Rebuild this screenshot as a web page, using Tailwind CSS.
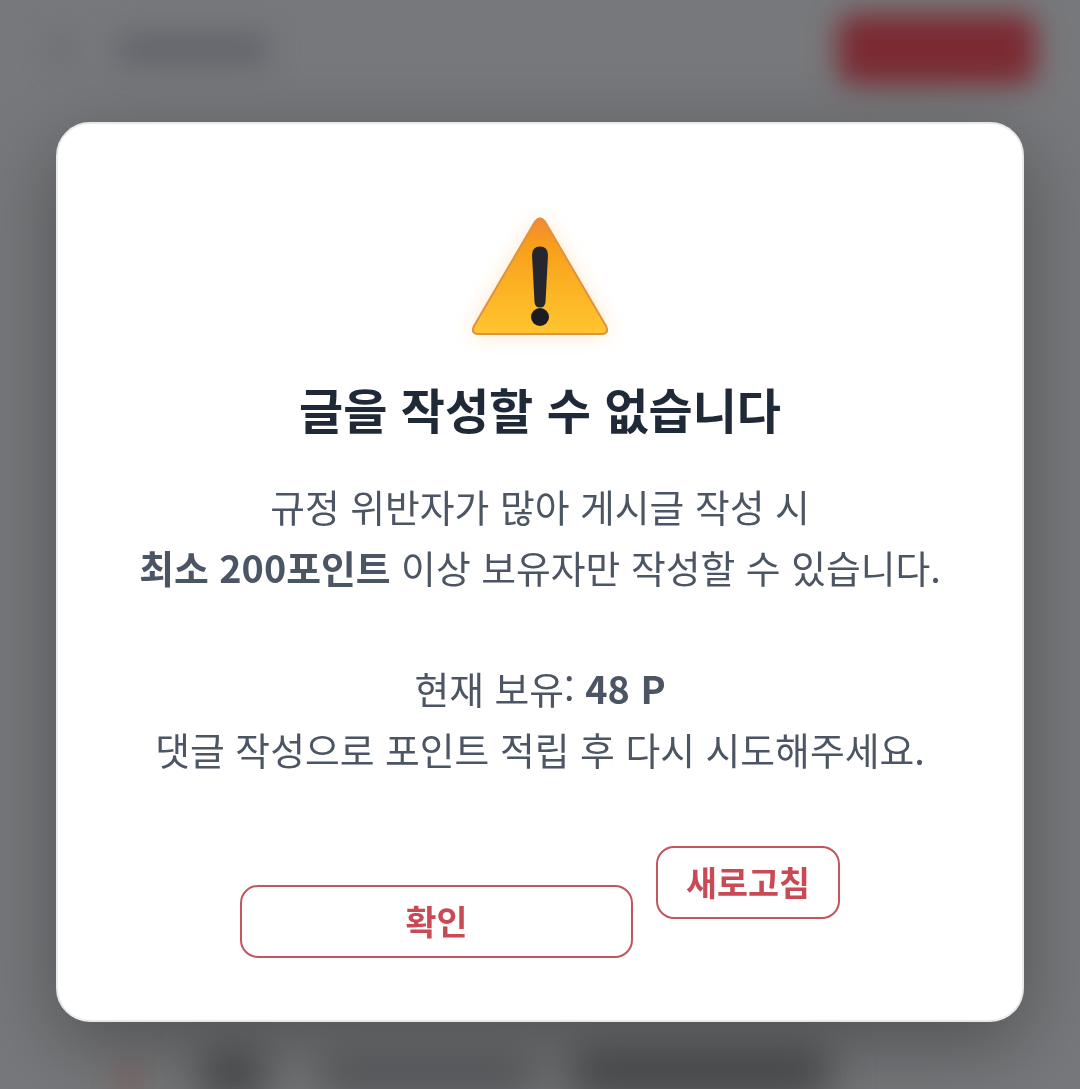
<!DOCTYPE html>
<html lang="ko">
<head>
    <meta charset="UTF-8">
    <meta name="viewport" content="width=device-width, initial-scale=1.0">
    <title>글을 작성할 수 없습니다</title>
    <script src="https://cdn.jsdelivr.net/npm/@tailwindcss/browser@4"></script>
</head>
<body class="font-['Noto_Sans_CJK_KR','Noto_Sans',sans-serif]">
    <div class="relative w-[1080px] h-[1089px] overflow-hidden bg-[#77787b]">
        <!-- blurred page behind the dialog -->
        <div class="absolute inset-0 blur-[14px]" aria-hidden="true">
            <div class="absolute left-[52px] top-[36px] w-[20px] h-[28px] rounded bg-[#6c6d72]"></div>
            <div class="absolute left-[118px] top-[34px] w-[150px] h-[30px] rounded bg-[#62646d]"></div>
            <div class="absolute left-[838px] top-[14px] w-[198px] h-[70px] rounded-2xl bg-[#7b2a32]"></div>
            <div class="absolute left-[116px] top-[1060px] w-[26px] h-[40px] bg-[#7a6a66]"></div>
        </div>
        <div class="absolute inset-0 blur-[20px]" aria-hidden="true">
            <div class="absolute left-[200px] top-[1052px] w-[66px] h-[50px] rounded-lg bg-[#494a4c]"></div>
            <div class="absolute left-[320px] top-[1060px] w-[215px] h-[34px] bg-[#525356]"></div>
            <div class="absolute left-[570px] top-[1050px] w-[260px] h-[50px] rounded-lg bg-[#494a4c]"></div>
        </div>

        <div class="absolute left-[56px] top-[122px] w-[968px] h-[900px] rounded-[34px] border-2 border-[#e8e9ec] bg-white shadow-[0_24px_80px_rgba(0,0,0,0.32)] flex flex-col items-center pt-[81px] text-center">
            <svg class="w-[160px] h-[140px]" viewBox="0 0 160 140" overflow="visible" aria-hidden="true">
                <defs>
                    <linearGradient id="tri" x1="0" y1="0" x2="0" y2="1">
                        <stop offset="0" stop-color="#f3863a"/>
                        <stop offset="0.2" stop-color="#f89c1c"/>
                        <stop offset="0.55" stop-color="#fbb022"/>
                        <stop offset="1" stop-color="#ffc531"/>
                    </linearGradient>
                    <filter id="glow" x="-40%" y="-40%" width="180%" height="180%">
                        <feGaussianBlur stdDeviation="11"/>
                    </filter>
                    <filter id="soft" x="-5%" y="-5%" width="110%" height="110%">
                        <feGaussianBlur stdDeviation="0.6"/>
                    </filter>
                </defs>
                <path d="M80 14 L148 128 H12 Z" fill="#ffb14d" opacity="0.4" filter="url(#glow)"/>
                <g filter="url(#soft)">
                    <path d="M75 16.5 Q80 10 85 16.5 L146 121 Q149.5 128.5 142 129 H18 Q10.5 128.5 14 121 Z" fill="url(#tri)" stroke="#dd9440" stroke-width="2"/>
                    <path d="M72 50 Q72 41.5 80 41.5 Q88 41.5 88 50 L85.5 97 Q85 102.5 80 102.5 Q75 102.5 74.5 97 Z" fill="#26282d"/>
                    <circle cx="80" cy="112" r="9" fill="#1c1e21"/>
                </g>
            </svg>

            <h1 class="mt-[30px] text-[48px] leading-[66px] font-bold text-[#1f2937]">글을 작성할 수 없습니다</h1>

            <p class="mt-[35px] text-[37.8px] leading-[60.75px] text-[#4b5563]">
                규정 위반자가 많아 게시글 작성 시<br>
                <strong class="font-bold">최소 200포인트</strong> 이상 보유자만 작성할 수 있습니다.<br><br>
                현재 보유: <strong class="font-bold">48 P</strong><br>
                댓글 작성으로 포인트 적립 후 다시 시도해주세요.
            </p>

            <div class="mt-[66px] flex items-start gap-[23px]">
                <button class="mt-[39px] w-[393px] h-[73px] rounded-[18px] border-2 border-[#c4545d] bg-white text-[33.7px] font-bold text-[#c94a55]">확인</button>
                <button class="w-[184px] h-[73px] rounded-[18px] border-2 border-[#c4545d] bg-white text-[33.7px] font-bold text-[#c94a55]">새로고침</button>
            </div>
        </div>
    </div>
</body>
</html>
